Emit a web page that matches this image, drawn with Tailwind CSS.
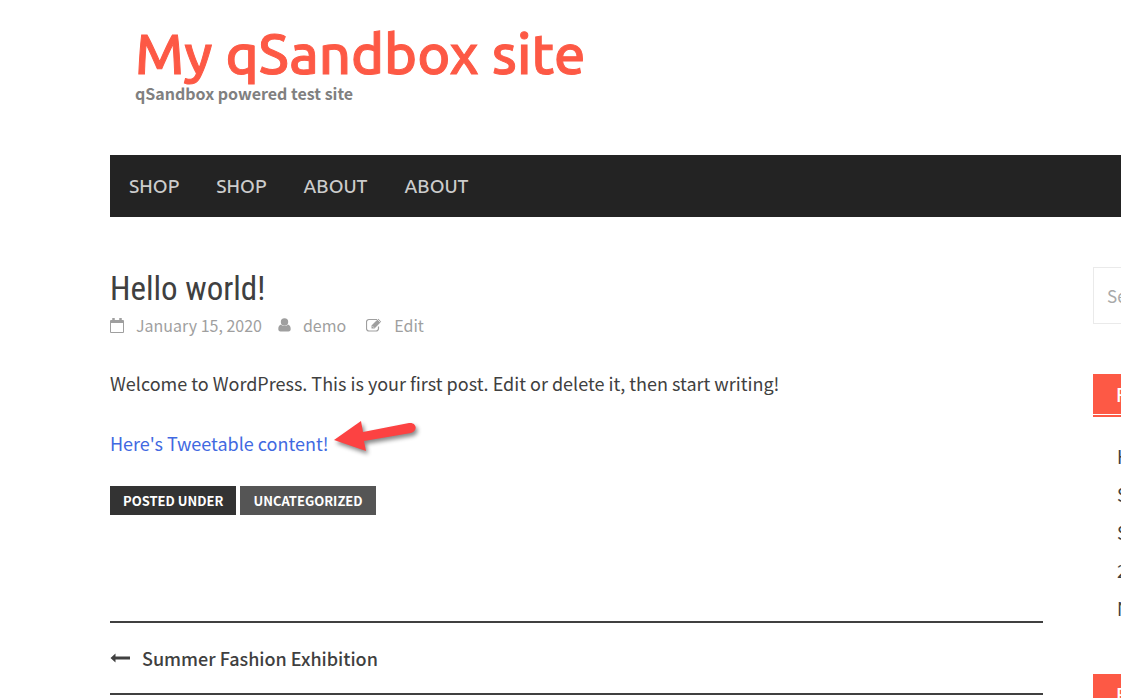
<!DOCTYPE html>
<html lang="en">
<head>
    <meta charset="UTF-8">
    <meta name="viewport" content="width=device-width, initial-scale=1.0">
    <title>Hello world! - My qSandbox site</title>
    <script src="https://cdn.jsdelivr.net/npm/@tailwindcss/browser@4"></script>
</head>
<body class="h-screen overflow-hidden bg-white pl-[110px] font-['Source_Sans_Pro','Noto_Sans_CJK_SC',sans-serif] text-[18px] leading-[30px] text-[#404040]">
    <!-- Site branding -->
    <header class="h-[155px] pt-6 pl-[25px]">
        <h1 class="font-['Ubuntu','Noto_Sans',sans-serif] text-[56px] leading-[59px] font-medium text-[#fd5945] [-webkit-text-stroke:1px_#fd5945]"><a href="#">My qSandbox site</a></h1>
        <p class="text-[16px] leading-5 font-bold text-[#808080]">qSandbox powered test site</p>
    </header>

    <!-- Main menu -->
    <nav class="flex h-[62px] items-center gap-[37px] bg-[#232323] px-[19px] font-['Ubuntu','Noto_Sans_CJK_SC',sans-serif] text-[19px] font-medium text-[#cccccc]">
        <a href="#">SHOP</a>
        <a href="#">SHOP</a>
        <a href="#">ABOUT</a>
        <a href="#">ABOUT</a>
    </nav>

    <div class="flex gap-[50px] pt-[50px]">
        <main class="min-w-0 flex-1">
            <article>
                <h2 class="font-['Roboto_Condensed','Liberation_Sans_Narrow',sans-serif] text-[33px] leading-[43px]">Hello world!</h2>
                <div class="flex items-center text-[16px] text-[#9f9f9f]">
                    <svg class="mr-3 h-[15px] w-[14px]" viewBox="0 0 14 15" fill="none" stroke="currentColor" aria-hidden="true">
                        <path d="M.5 2.500h13v12h-13z" />
                        <path d="M1 3.500h12M1 4.500h12" />
                        <path d="M3.500 0v4M10.500 0v4" stroke-width="2.500" />
                    </svg>
                    <a href="#" class="mr-4">January 15, 2020</a>
                    <svg class="mr-3 h-[14px] w-[13px]" viewBox="0 0 13 14" fill="currentColor" aria-hidden="true">
                        <circle cx="6.500" cy="4" r="3.700" />
                        <path d="M3 6.500C1 7 .3 9 .3 11c0 1.500.7 2.500 2.200 2.500h8c1.500 0 2.200-1 2.200-2.500 0-2-.7-4-2.700-4.500-2 2-5 2-7 0z" />
                    </svg>
                    <a href="#" class="mr-5">demo</a>
                    <svg class="mr-3 h-[14px] w-4" viewBox="0 0 16 14" fill="none" stroke="currentColor" aria-hidden="true">
                        <path d="M11 1.500H3A2.500 2.500 0 0 0 .5 4v6.500A2.500 2.500 0 0 0 3 13h7a2.500 2.500 0 0 0 2.500-2.500V8.500" stroke-width="1.200" />
                        <path d="M5.500 10.500V7.500L12.300.8l2.900 2.900-6.700 6.800z" fill="currentColor" stroke="none" />
                        <path d="M6.500 8.200l1.500 1.500M11.500 1.500l3 3" stroke="white" stroke-width=".7" />
                    </svg>
                    <a href="#">Edit</a>
                </div>

                <p class="mt-7">Welcome to WordPress. This is your first post. Edit or delete it, then start writing!</p>
                <p class="mt-[30px] flex items-center text-[#4169e1]">
                    <a href="#">Here's Tweetable content!</a>
                    <svg class="-my-4 h-12 w-[90px] shrink-0 drop-shadow-[2px_3px_2px_#00000077]" viewBox="0 0 90 48" fill="#fc4242" aria-hidden="true">
                        <path d="M5 21L32 2l2 11L80 4c8-1 9 8 2 10L35 22l2 10z" />
                    </svg>
                </p>

                <div class="mt-7 flex gap-1 text-[13px] leading-[29px] font-bold text-white">
                    <span class="bg-[#333333] px-[13px]">POSTED UNDER</span>
                    <a href="#" class="bg-[#555555] px-[13px]">UNCATEGORIZED</a>
                </div>
            </article>

            <!-- Post navigation -->
            <nav class="mt-[106px] border-y-2 border-[#404040] py-5 font-medium">
                <a href="#" class="flex items-center gap-3">
                    <svg class="h-3 w-5" viewBox="0 0 20 12" fill="currentColor" aria-hidden="true">
                        <path d="M.5 6l5-4.500V4.500H20v3H5.500v3z" />
                    </svg>
                    Summer Fashion Exhibition
                </a>
            </nav>
        </main>

        <!-- Sidebar, cut off by the window edge -->
        <aside class="w-7 shrink-0 overflow-hidden">
            <div class="w-[350px]">
                <input type="search" aria-label="Search" placeholder="Search &hellip;" class="block h-[57px] w-full border border-[#eaeaea] px-[13px] text-[17px] placeholder:text-[#a9a9a9]">
                <section class="mt-[50px]">
                    <div class="border-b-2 border-[#fd5945] pb-px">
                        <h3 class="bg-[#fd5945] pl-[23px] text-[18px] leading-10 font-medium text-white">Recent Posts</h3>
                    </div>
                    <ul class="mt-5 pl-6 leading-[38px]">
                        <li><a href="#">Hello world!</a></li>
                        <li><a href="#">Summer Fashion Exhibition</a></li>
                        <li><a href="#">S</a></li>
                        <li><a href="#">2</a></li>
                        <li><a href="#">N</a></li>
                    </ul>
                </section>
                <section class="mt-[47px]">
                    <h3 class="bg-[#fd5945] pl-[23px] text-[18px] leading-10 font-medium text-white">Recent Comments</h3>
                </section>
            </div>
        </aside>
    </div>
</body>
</html>
